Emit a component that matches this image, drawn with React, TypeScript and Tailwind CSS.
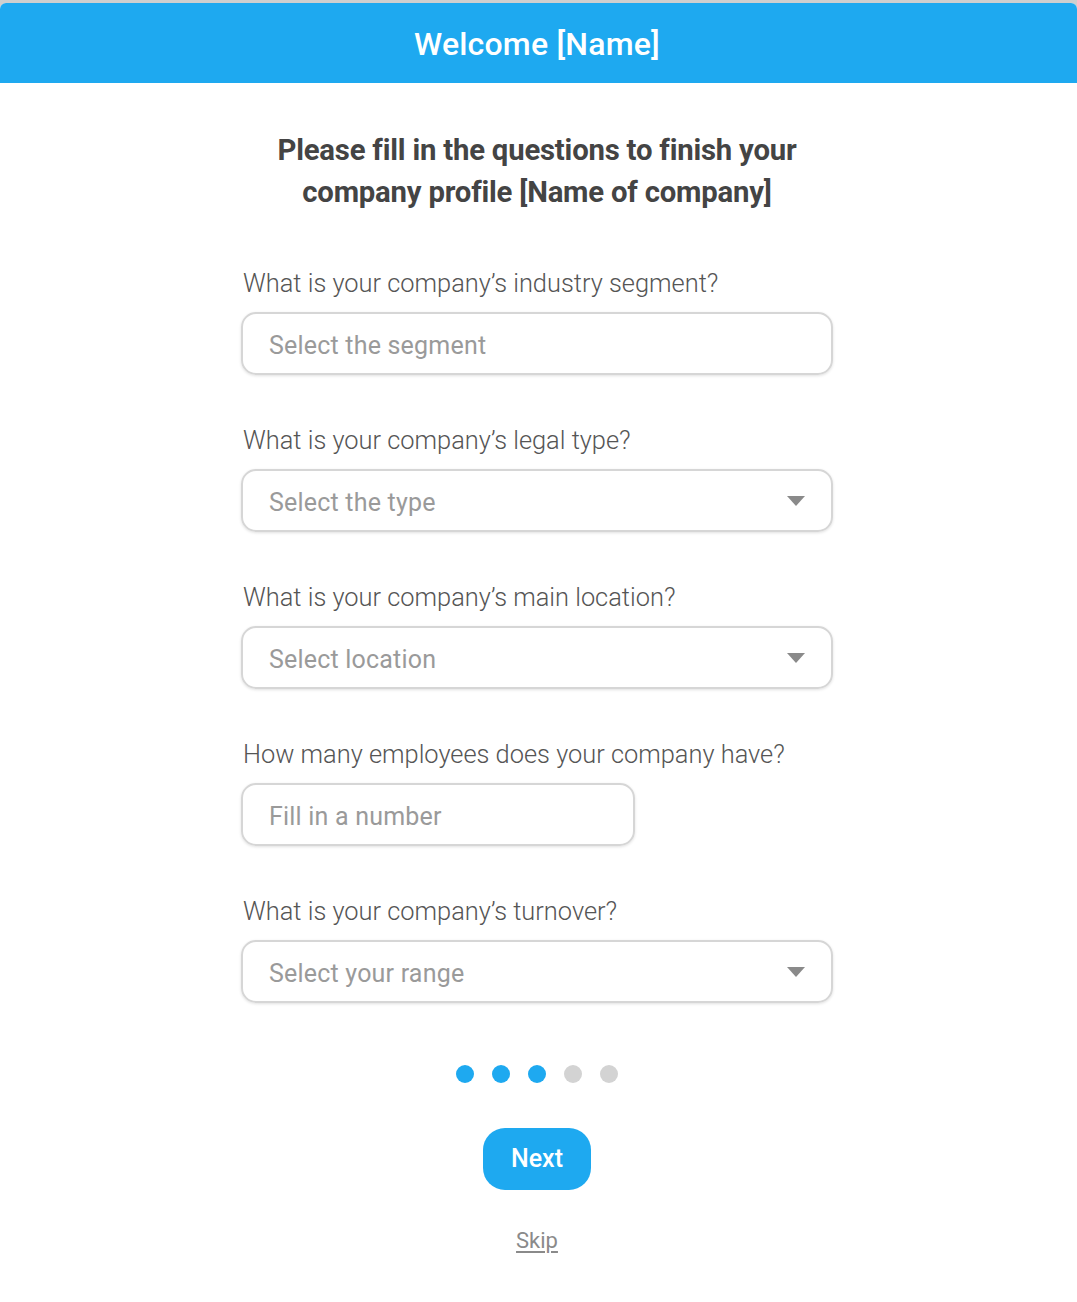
import { useState } from "react";

const fields = [
  { label: "What is your company’s industry segment?", placeholder: "Select the segment", dropdown: false, wide: true },
  { label: "What is your company’s legal type?", placeholder: "Select the type", dropdown: true, wide: true },
  { label: "What is your company’s main location?", placeholder: "Select location", dropdown: true, wide: true },
  { label: "How many employees does your company have?", placeholder: "Fill in a number", dropdown: false, wide: false },
  { label: "What is your company’s turnover?", placeholder: "Select your range", dropdown: true, wide: true },
];

function Caret() {
  return (
    <svg width="20" height="12" viewBox="0 0 20 12" className="shrink-0 -mt-[4px]">
      <path d="M1 1 L19 1 L10 11 Z" fill="#8a8a8a" />
    </svg>
  );
}

export default function App() {
  const [step] = useState(3);

  return (
    <div className="min-h-[1302px] bg-[#cfcfcf] pt-[3px] font-['Roboto','Liberation_Sans',sans-serif]">
      <div className="bg-white rounded-t-[6px] min-h-[1299px] overflow-hidden">
        {/* Header */}
        <div className="h-[80px] bg-[#1ea9f0] flex items-center justify-center pr-[3px] pt-[1px]">
          <h1 className="text-white text-[32px] font-medium tracking-[0.2px]">Welcome [Name]</h1>
        </div>

        <div className="pr-[3px]">
          <div className="w-[592px] mx-auto pt-[46px]">
            <h2 className="text-center text-[#444] text-[29.3px] font-bold leading-[42px] tracking-[-0.2px] -mx-[20px]">
              Please fill in the questions to finish your
              <br />
              company profile [Name of company]
            </h2>

            <div className="mt-[55px] flex flex-col gap-[50px]">
              {fields.map((f) => (
                <div key={f.label}>
                  <label className="block text-[25.4px] font-light text-[#555] leading-[30px] pl-[2px] whitespace-nowrap">
                    {f.label}
                  </label>
                  <div
                    className={`mt-[14px] h-[63px] rounded-[15px] border-2 border-[#d6d6d6] shadow-[0_1px_3px_rgba(0,0,0,0.12)] flex items-center justify-between pl-[26px] pr-[25px] pt-[5px] ${
                      f.wide ? "w-[592px]" : "w-[394px]"
                    }`}
                  >
                    <span className="text-[25px] text-[#9a9a9a] tracking-[0.2px]">{f.placeholder}</span>
                    {f.dropdown && <Caret />}
                  </div>
                </div>
              ))}
            </div>

            {/* Step dots */}
            <div className="mt-[62px] flex justify-center gap-[18px]">
              {[1, 2, 3, 4, 5].map((i) => (
                <span
                  key={i}
                  className={`w-[18px] h-[18px] rounded-full ${i <= step ? "bg-[#1ea9f0]" : "bg-[#d3d3d3]"}`}
                />
              ))}
            </div>

            <div className="mt-[45px] flex justify-center">
              <button className="w-[108px] h-[62px] rounded-[22px] bg-[#1ea9f0] text-white text-[25px] font-medium">
                Next
              </button>
            </div>

            <div className="mt-[34px] flex justify-center">
              <a href="#" className="text-[22px] text-[#8a8a8a] underline underline-offset-[3px]">
                Skip
              </a>
            </div>
          </div>
        </div>
      </div>
    </div>
  );
}
